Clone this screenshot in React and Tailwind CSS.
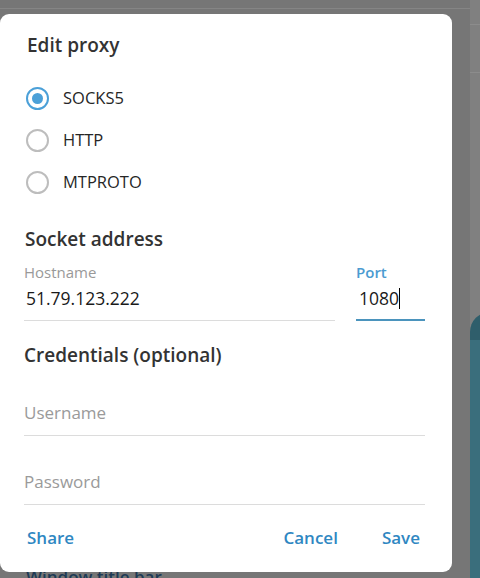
import React from "react";

const font = { fontFamily: '"Open Sans", "Noto Sans", sans-serif' };

const Radio = ({ label, checked }) => (
  <div className="flex items-center h-[42px] pl-[26px]">
    <span
      className={`w-[23px] h-[23px] rounded-full border-2 flex items-center justify-center ${
        checked ? "border-[#4ba0d8]" : "border-[#bdbdbd]"
      }`}
    >
      {checked && <span className="w-[11px] h-[11px] rounded-full bg-[#4ba0d8]" />}
    </span>
    <span className="ml-[14px] text-[16.5px] text-[#262626]">{label}</span>
  </div>
);

const Field = ({ placeholder }) => (
  <div className="ml-[24px] mr-[27px] h-[69px] flex flex-col justify-end">
    <div className="text-[17px] leading-[24px] text-[#9a9a9a] pb-[10px]">{placeholder}</div>
    <div className="h-px bg-[#dcdcdc]" />
  </div>
);

export default function App() {
  return (
    <div className="relative w-[480px] h-[578px] overflow-hidden bg-[#767676]" style={font}>
      {/* window behind the overlay */}
      <div className="absolute top-[8px] left-0 right-0 h-px bg-[#858585]" />
      <div className="absolute top-0 bottom-0 left-[470px] right-0 bg-[#808080]">
        <div className="absolute top-[24px] left-0 right-0 h-px bg-[#8c8c8c]" />
        <div className="absolute top-[72px] left-0 right-0 h-px bg-[#8c8c8c]" />
        <div className="absolute top-[312px] left-0 w-[40px] h-[54px] rounded-full bg-[#2f5e6b]" />
        <div className="absolute top-[340px] bottom-0 left-0 right-0 bg-[#3a6e7c]" />
      </div>
      <div className="absolute top-[564px] left-[26px] text-[17px] font-semibold text-[#1d3a55]">
        Window title bar
      </div>

      <div className="pt-[14px]">
        <div className="relative w-[452px] h-[558px] bg-white rounded-[9px] flex flex-col">
          <div className="pt-[19px] pl-[27px] text-[19px] font-semibold text-[#333] leading-[24px]">
            Edit proxy
          </div>
          <div className="mt-[20px]">
            <Radio label="SOCKS5" checked />
            <Radio label="HTTP" />
            <Radio label="MTPROTO" />
          </div>
          <div className="mt-[24px] pl-[25px] text-[19px] font-semibold text-[#333] leading-[24px]">
            Socket address
          </div>
          <div className="flex mt-[11px] pl-[24px]">
            <div className="w-[311px]">
              <div className="text-[15px] text-[#999] leading-[20px]">Hostname</div>
              <div className="text-[17.5px] text-[#1a1a1a] leading-[24px] mt-[4px] pl-[2px]">
                51.79.123.222
              </div>
              <div className="h-px bg-[#dcdcdc] mt-[10px]" />
            </div>
            <div className="ml-[21px] w-[69px]">
              <div className="text-[15px] font-semibold text-[#4b9bd1] leading-[20px]">Port</div>
              <div className="text-[17.5px] text-[#1a1a1a] leading-[24px] mt-[4px] pl-[3px] flex items-center">
                1080<span className="w-px h-[21px] bg-black" />
              </div>
              <div className="h-[2px] bg-[#4b94bd] mt-[9px]" />
            </div>
          </div>
          <div className="mt-[22px] pl-[24px] text-[19px] font-semibold text-[#333] leading-[24px]">
            Credentials (optional)
          </div>
          <Field placeholder="Username" />
          <Field placeholder="Password" />
          <div className="flex items-center mt-[21px] pl-[27px] pr-[32px] text-[17px] leading-[24px] font-semibold text-[#2f87c2]">
            <span>Share</span>
            <span className="ml-auto">Cancel</span>
            <span className="ml-[44px]">Save</span>
          </div>
        </div>
      </div>
    </div>
  );
}
